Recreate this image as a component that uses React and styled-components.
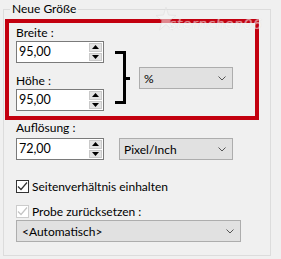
import React from 'react';
import styled, { createGlobalStyle } from 'styled-components';

const Global = createGlobalStyle`
  html, body { margin: 0; padding: 0; background: #f0f0f0; }
  body {
    width: 281px; height: 259px; overflow: hidden;
    font-family: Lato, "Noto Sans", sans-serif;
    font-size: 12px; color: #000;
  }
`;

const Page = styled.div`
  position: relative;
  width: 281px;
  height: 259px;
  box-sizing: border-box;
  padding: 1px 0 0 3px;
`;

const Group = styled.fieldset`
  margin: 0;
  min-width: 0;
  width: 268px;
  height: 255px;
  box-sizing: border-box;
  border: 1px solid #dcdcdc;
  padding: 2px 0 0 1px;
`;

const Legend = styled.legend`
  margin-left: 5px;
  padding: 0 2px;
  line-height: 16px;
  height: 16px;
`;

const Highlight = styled.div`
  width: 254px;
  box-sizing: border-box;
  border: 4px solid #c3000f;
  display: flex;
  align-items: flex-start;
  padding: 2px 0 5px 7px;
`;

const Column = styled.div`
  display: flex;
  flex-direction: column;
`;

const Label = styled.div`
  line-height: 16px;
  height: 16px;
  white-space: nowrap;
  margin-top: ${p => p.$gap || 0}px;
`;

const SpinBox = styled.div`
  width: 88px;
  height: 22px;
  box-sizing: border-box;
  border: 1px solid #7a7a7a;
  background: #fff;
  display: flex;
  align-items: center;
  padding: 1px 1px 1px 2px;
  margin-top: ${p => p.$gap || 0}px;
`;

const SpinValue = styled.span`
  flex: 1;
  line-height: 18px;
  font-size: 12.5px;
`;

const SpinButtons = styled.div`
  display: flex;
  flex-direction: column;
  gap: 1px;
  align-self: stretch;
  justify-content: center;
`;

const SpinButton = styled.div`
  width: 13px;
  height: 9px;
  box-sizing: border-box;
  background: #e3e3e3;
  border: 1px solid #c9c9c9;
  display: flex;
  align-items: center;
  justify-content: center;
`;

const Bracket = styled.svg`
  display: block;
  margin: 26px 0 0 11px;
  flex: none;
`;

const Select = styled.div`
  width: ${p => p.$w}px;
  height: 22px;
  box-sizing: border-box;
  border: 1px solid #adadad;
  background: #e1e1e1;
  display: flex;
  align-items: center;
  justify-content: space-between;
  padding: 0 6px 0 ${p => p.$pl || 4}px;
  margin: ${p => p.$m || '0'};
  flex: none;
`;

const Lower = styled.div`
  padding-left: 11px;
  display: flex;
  flex-direction: column;
`;

const Row = styled.div`
  display: flex;
  align-items: center;
  margin-top: ${p => p.$gap || 0}px;
`;

const CheckRow = styled.div`
  display: flex;
  align-items: center;
  height: 16px;
  gap: 3px;
  margin-top: ${p => p.$gap || 0}px;
`;

const Box = styled.div`
  width: 13px;
  height: 13px;
  box-sizing: border-box;
  border: 1px solid ${p => (p.$disabled ? '#cccccc' : '#333333')};
  background: #fff;
  display: flex;
  align-items: center;
  justify-content: center;
`;

const Watermark = styled.div`
  position: absolute;
  left: 155px;
  top: 6px;
  display: flex;
  align-items: flex-end;
  pointer-events: none;
  opacity: 0.55;
`;

const MarkText = styled.span`
  font-family: "DejaVu Sans", sans-serif;
  font-style: italic;
  font-size: 14px;
  color: #f8f8f8;
  text-shadow: 0 0 1px #c8c8c8;
  margin-left: -8px;
  letter-spacing: 0.5px;
`;

const Triangle = ({ up }) => (
  <svg width="7" height="4" viewBox="0 0 7 4">
    <path d={up ? 'M0 4 L3.5 0 L7 4 Z' : 'M0 0 L3.5 4 L7 0 Z'} fill="#000" />
  </svg>
);

const Chevron = () => (
  <svg width="8" height="5" viewBox="0 0 8 5">
    <path d="M0.5 0.5 L4 4 L7.5 0.5" stroke="#555" strokeWidth="1" fill="none" />
  </svg>
);

const Check = ({ color }) => (
  <svg width="11" height="11" viewBox="0 0 11 11">
    <path d="M1 5.5 L4 8.5 L10 1.5" stroke={color} strokeWidth="1.2" fill="none" />
  </svg>
);

const Spin = ({ value, gap }) => (
  <SpinBox $gap={gap}>
    <SpinValue>{value}</SpinValue>
    <SpinButtons>
      <SpinButton><Triangle up /></SpinButton>
      <SpinButton><Triangle /></SpinButton>
    </SpinButtons>
  </SpinBox>
);

export default function App() {
  return (
    <>
      <Global />
      <Page>
        <Group>
          <Legend>Neue Größe</Legend>
          <Highlight>
            <Column>
              <Label>Breite :</Label>
              <Spin value="95,00" />
              <Label $gap={10}>Höhe :</Label>
              <Spin value="95,00" />
            </Column>
            <Bracket width="15" height="53" viewBox="0 0 15 53">
              <path d="M0 0 H11 V53 H0 V50 H8 V3 H0 Z M11 26 H15 V29 H11 Z" fill="#000" />
            </Bracket>
            <Select $w={94} $m="42px 0 0 9px">
              <span>%</span>
              <Chevron />
            </Select>
          </Highlight>
          <Lower>
            <Label>Auflösung :</Label>
            <Row $gap={2}>
              <Spin value="72,00" />
              <Select $w={114} $m="0 0 0 15px">
                <span>Pixel/Inch</span>
                <Chevron />
              </Select>
            </Row>
            <CheckRow $gap={18}>
              <Box><Check color="#333" /></Box>
              <span>Seitenverhältnis einhalten</span>
            </CheckRow>
            <CheckRow $gap={9}>
              <Box $disabled><Check color="#c4c4c4" /></Box>
              <span>Probe zurücksetzen :</span>
            </CheckRow>
            <Select $w={225} $pl={5} $m="1px 0 0 0">
              <span>&lt;Automatisch&gt;</span>
              <Chevron />
            </Select>
          </Lower>
        </Group>
        <Watermark>
          <svg width="22" height="26" viewBox="0 0 22 26">
            <path d="M11 1 L13.5 9 L21 9.5 L15 14.5 L17.5 24 L11 18.5 L4.5 24 L7 14.5 L1 9.5 L8.5 9 Z"
              fill="#f6f6f6" stroke="#dadada" strokeWidth="0.8" />
          </svg>
          <MarkText>sternchen06</MarkText>
        </Watermark>
      </Page>
    </>
  );
}
